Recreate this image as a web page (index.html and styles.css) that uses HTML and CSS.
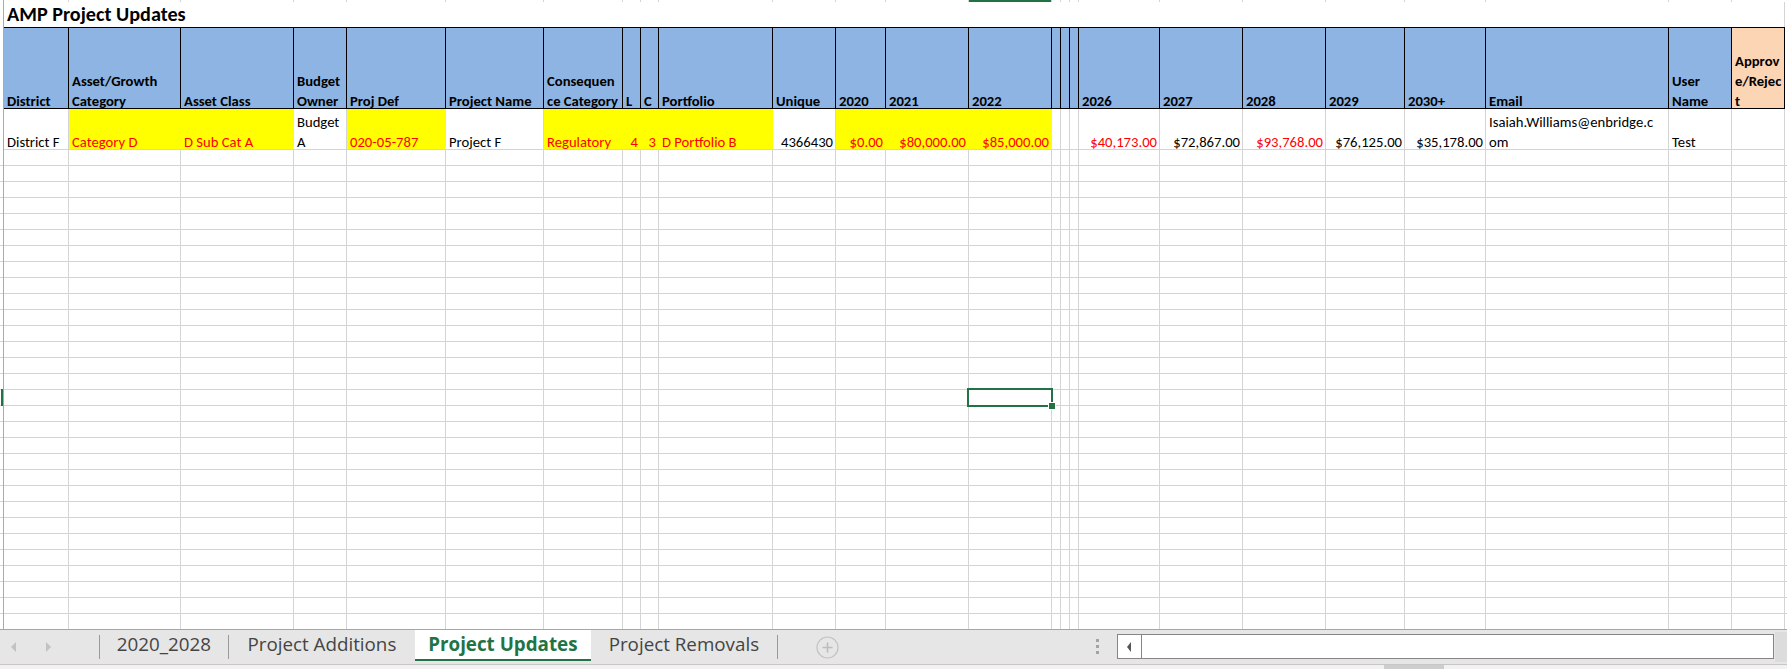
FILE: index.html
```html
<!DOCTYPE html>
<html lang="en">
<head>
<meta charset="utf-8">
<title>AMP Project Updates</title>
<link rel="stylesheet" href="styles.css">
</head>
<body>
<div class="app">
  <div class="sheet">
    <div class="row colhdr">
      <div class="rh"></div>
      <div class="c"></div><div class="c"></div><div class="c"></div><div class="c"></div><div class="c"></div>
      <div class="c"></div><div class="c"></div><div class="c"></div><div class="c"></div><div class="c"></div>
      <div class="c"></div><div class="c"></div><div class="c"></div><div class="c sel"></div><div class="c"></div>
      <div class="c"></div><div class="c"></div><div class="c"></div><div class="c"></div><div class="c"></div>
      <div class="c"></div><div class="c"></div><div class="c"></div><div class="c"></div><div class="z"></div>
    </div>

    <div class="row title">
      <div class="rh"></div>
      <div class="title-cell">AMP Project Updates</div>
      <div class="c"></div>
      <div class="z"></div>
    </div>

    <div class="row hdr">
      <div class="rh"></div>
      <div class="h">District</div>
      <div class="h">Asset/Growth<br>Category</div>
      <div class="h">Asset Class</div>
      <div class="h">Budget<br>Owner</div>
      <div class="h">Proj Def</div>
      <div class="h">Project Name</div>
      <div class="h">Consequen<br>ce Category</div>
      <div class="h">L</div>
      <div class="h">C</div>
      <div class="h">Portfolio</div>
      <div class="h">Unique</div>
      <div class="h">2020</div>
      <div class="h">2021</div>
      <div class="h">2022</div>
      <div class="h"></div>
      <div class="h"></div>
      <div class="h"></div>
      <div class="h">2026</div>
      <div class="h">2027</div>
      <div class="h">2028</div>
      <div class="h">2029</div>
      <div class="h">2030+</div>
      <div class="h">Email</div>
      <div class="h">User<br>Name</div>
      <div class="h peach">Approv<br>e/Rejec<br>t</div>
      <div class="z"></div>
    </div>

    <div class="row data">
      <div class="rh"></div>
      <div class="d">District F</div>
      <div class="d y red">Category D</div>
      <div class="d y red">D Sub Cat A</div>
      <div class="d">Budget<br>A</div>
      <div class="d y red">020-05-787</div>
      <div class="d">Project F</div>
      <div class="d y red">Regulatory</div>
      <div class="d y red r">4</div>
      <div class="d y red r">3</div>
      <div class="d y red">D Portfolio B</div>
      <div class="d r">4366430</div>
      <div class="d y red r">$0.00</div>
      <div class="d y red r">$80,000.00</div>
      <div class="d y red r">$85,000.00</div>
      <div class="d"></div>
      <div class="d"></div>
      <div class="d"></div>
      <div class="d red r">$40,173.00</div>
      <div class="d r">$72,867.00</div>
      <div class="d red r">$93,768.00</div>
      <div class="d r">$76,125.00</div>
      <div class="d r">$35,178.00</div>
      <div class="d">Isaiah.Williams@enbridge.c<br>om</div>
      <div class="d">Test</div>
      <div class="d"></div>
      <div class="z"></div>
    </div>

    <div class="row empty">
      <div class="rh"></div>
      <div class="e"></div><div class="e"></div><div class="e"></div><div class="e"></div><div class="e"></div>
      <div class="e"></div><div class="e"></div><div class="e"></div><div class="e"></div><div class="e"></div>
      <div class="e"></div><div class="e"></div><div class="e"></div><div class="e"></div><div class="e"></div>
      <div class="e"></div><div class="e"></div><div class="e"></div><div class="e"></div><div class="e"></div>
      <div class="e"></div><div class="e"></div><div class="e"></div><div class="e"></div><div class="e"></div>
      <div class="e z"></div>
    </div>

    <div class="row-mark"></div>
    <div class="selection"><span class="handle"></span></div>
  </div>

  <div class="tabbar">
    <div class="nav">
      <span class="tri-l"></span>
      <span class="tri-r"></span>
    </div>
    <span class="sep"></span>
    <div class="tab t1">2020_2028</div>
    <span class="sep"></span>
    <div class="tab t2">Project Additions</div>
    <div class="tab active">Project Updates</div>
    <div class="tab t2">Project Removals</div>
    <span class="sep"></span>
    <svg class="plus" width="23" height="23" viewBox="0 0 23 23">
      <circle cx="11.5" cy="11.5" r="10.5" fill="none" stroke="#c3c3c3" stroke-width="1.2"/>
      <path d="M11.5 6.5v10M6.5 11.5h10" stroke="#bdbdbd" stroke-width="1.6"/>
    </svg>
    <div class="dots"><i></i><i></i><i></i></div>
    <div class="hscroll">
      <div class="hbtn"><span class="tri-s"></span></div>
    </div>
    <div class="edge"></div>
  </div>
  <div class="footer"><span class="thumb"></span></div>
</div>
</body>
</html>
```

FILE: styles.css
```css
* { box-sizing: border-box; margin: 0; padding: 0; }

html, body {
  width: 1787px;
  height: 669px;
  overflow: hidden;
  background: #ffffff;
}

body {
  font-family: Carlito, Calibri, Lato, "Liberation Sans", sans-serif;
  color: #000;
}

.app {
  display: flex;
  flex-direction: column;
  height: 669px;
}

.sheet {
  position: relative;
  height: 629px;
  overflow: hidden;
  flex: none;
}

.row {
  display: grid;
  grid-template-columns: 4px 65px 112px 113px 53px 99px 98px 79px 18px 18px 114px 63px 50px 83px 83px 9px 9px 9px 81px 83px 83px 79px 81px 183px 63px 53px 2px;
}

.rh {
  border-right: 1px solid #a9a9a9;
  background: #fff;
}

/* column header remnant */
.colhdr { height: 2px; }
.colhdr .c { border-right: 1px solid #d4d4d4; }
.colhdr .sel { background: #217346; }

/* title row */
.title { height: 25px; }
.title-cell {
  grid-column: 2 / 26;
  background: #fff;
  font-weight: 700;
  font-size: 20.2px;
  line-height: 25px;
  padding-left: 3px;
  white-space: nowrap;
}
.title .c { border-right: 1px solid #d4d4d4; }

/* header row */
.hdr { height: 82px; }
.h {
  background: #8db4e2;
  border-top: 1px solid #000;
  border-bottom: 1px solid #000;
  border-right: 1px solid #000;
  font-weight: 700;
  font-size: 14.67px;
  line-height: 20px;
  display: flex;
  flex-direction: column;
  justify-content: flex-end;
  padding: 0 1px 0 3px;
  white-space: nowrap;
  overflow: hidden;
}
.h::after,
.d::after {
  content: "";
  height: 0;
  margin-bottom: -3px;
}
.h.peach { background: #fcd5b4; }

/* data row */
.data { height: 41px; }
.d {
  border-right: 1px solid #d4d4d4;
  border-bottom: 1px solid #d4d4d4;
  font-size: 14.67px;
  line-height: 20px;
  display: flex;
  flex-direction: column;
  justify-content: flex-end;
  padding: 0 2px 0 3px;
  white-space: nowrap;
}
.d.y { background: #ffff00; border-right-color: #ffff00; }
.d.red { color: #ff0000; }
.d.r { text-align: right; }

/* empty grid */
.empty {
  height: 480px;
  background: repeating-linear-gradient(to bottom, transparent 0, transparent 15px, #d4d4d4 15px, #d4d4d4 16px);
}
.empty .rh { background: transparent; }
.e { border-right: 1px solid #d4d4d4; }
.e.z { border-right: 0; }

/* selection overlays */
.row-mark {
  position: absolute;
  left: 1px;
  top: 389px;
  width: 2px;
  height: 17px;
  background: #217346;
}
.selection {
  position: absolute;
  left: 967px;
  top: 388px;
  width: 86px;
  height: 19px;
  border: 2px solid #217346;
}
.handle {
  position: absolute;
  right: -5px;
  bottom: -5px;
  width: 8px;
  height: 8px;
  background: #217346;
  border: 1px solid #fff;
}

/* sheet tab bar */
.tabbar {
  height: 35px;
  flex: none;
  border-top: 1px solid #a6a6a6;
  background: #e6e6e6;
  display: flex;
  align-items: flex-start;
  font-family: "Open Sans", "Noto Sans", sans-serif;
  font-size: 18.8px;
  color: #444;
  position: relative;
}
.nav {
  width: 99px;
  height: 34px;
  position: relative;
}
.tri-l, .tri-r {
  position: absolute;
  top: 12px;
  width: 0;
  height: 0;
  border-top: 5px solid transparent;
  border-bottom: 5px solid transparent;
}
.tri-l { left: 11px; border-right: 5px solid #c2c2c2; }
.tri-r { left: 46px; border-left: 5px solid #c2c2c2; }
.sep {
  width: 1px;
  height: 24px;
  margin-top: 5px;
  background: #9a9a9a;
  flex: none;
}
.tab {
  height: 31px;
  line-height: 29px;
  text-align: center;
  white-space: nowrap;
  flex: none;
}
.t1 { width: 128px; }
.t2 { width: 186px; }
.active {
  width: 176px;
  background: #fff;
  color: #217346;
  font-weight: 700;
  border-bottom: 2px solid #217346;
}
.plus {
  margin-left: 38px;
  margin-top: 6px;
  flex: none;
}
.dots {
  margin-left: 257px;
  margin-top: 9px;
  display: flex;
  flex-direction: column;
  gap: 3px;
}
.dots i {
  display: block;
  width: 3px;
  height: 3px;
  background: #a3a3a3;
}
.hscroll {
  margin-left: 18px;
  margin-top: 4px;
  width: 658px;
  height: 25px;
  border: 1px solid #858585;
  background: #fff;
  display: flex;
}
.hbtn {
  width: 24px;
  height: 23px;
  border-right: 1px solid #858585;
  display: flex;
  align-items: center;
  justify-content: center;
}
.tri-s {
  width: 0;
  height: 0;
  border-top: 5px solid transparent;
  border-bottom: 5px solid transparent;
  border-right: 4px solid #555;
}
.edge {
  margin-left: 1px;
  margin-top: 2px;
  width: 12px;
  height: 30px;
  background: #dcdcdc;
}
.footer {
  height: 5px;
  flex: none;
  border-top: 1px solid #c6c6c6;
  background: #f3f2f1;
  position: relative;
}
.thumb {
  position: absolute;
  left: 1384px;
  top: 0;
  width: 60px;
  height: 4px;
  background: #cdcdcd;
}
```
